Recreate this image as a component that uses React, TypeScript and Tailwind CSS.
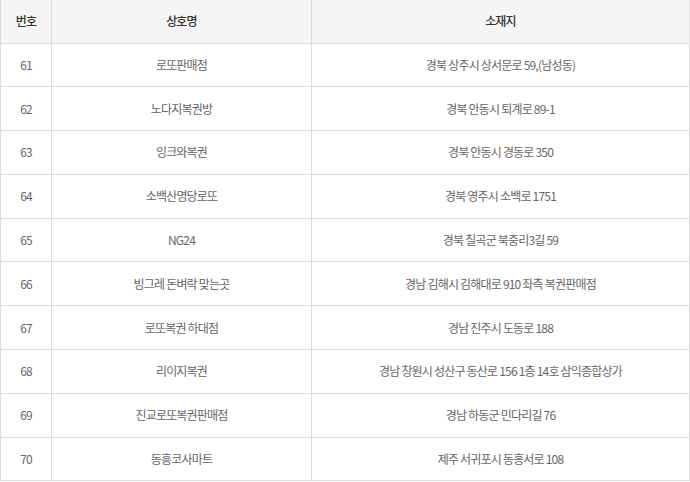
const rows = [
  { no: 61, name: "로또판매점", addr: "경북 상주시 상서문로 59,(남성동)" },
  { no: 62, name: "노다지복권방", addr: "경북 안동시 퇴계로 89-1" },
  { no: 63, name: "잉크와복권", addr: "경북 안동시 경동로 350" },
  { no: 64, name: "소백산명당로또", addr: "경북 영주시 소백로 1751" },
  { no: 65, name: "NG24", addr: "경북 칠곡군 북중리3길 59" },
  { no: 66, name: "빙그레 돈벼락 맞는곳", addr: "경남 김해시 김해대로 910 좌측 복권판매점" },
  { no: 67, name: "로또복권 하대점", addr: "경남 진주시 도동로 188" },
  { no: 68, name: "리이지복권", addr: "경남 창원시 성산구 동산로 156 1층 14호 삼익종합상가" },
  { no: 69, name: "진교로또복권판매점", addr: "경남 하동군 민다리길 76" },
  { no: 70, name: "동흥코사마트", addr: "제주 서귀포시 동홍서로 108" },
];

export default function App() {
  return (
    <div className="w-[690px] h-[482px] bg-white overflow-hidden font-['Noto_Sans_CJK_KR',sans-serif] text-[12px] tracking-[-0.8px]">
      <table className="w-[690px] border-collapse table-fixed">
        <colgroup>
          <col className="w-[51px]" />
          <col className="w-[260px]" />
          <col />
        </colgroup>
        <thead>
          <tr className="h-[43px] bg-[#f5f5f5] text-[#333]">
            <th className="border border-t-0 border-[#dcdcdc] font-medium">번호</th>
            <th className="border border-t-0 border-[#dcdcdc] font-medium">상호명</th>
            <th className="border border-t-0 border-[#dcdcdc] font-medium">소재지</th>
          </tr>
        </thead>
        <tbody className="text-[#666]">
          {rows.map((r) => (
            <tr key={r.no} className="h-[43.8px]">
              <td className="border border-[#dcdcdc] text-center">{r.no}</td>
              <td className="border border-[#dcdcdc] text-center">{r.name}</td>
              <td className="border border-[#dcdcdc] text-center">{r.addr}</td>
            </tr>
          ))}
        </tbody>
      </table>
    </div>
  );
}
